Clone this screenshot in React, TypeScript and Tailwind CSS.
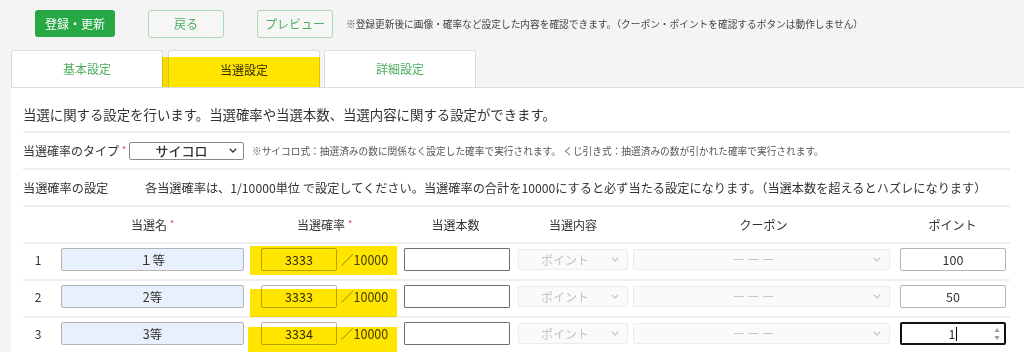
import React from "react";

const rows = [
  { no: 1, name: "１等", prob: "3333", point: "100", focused: false },
  { no: 2, name: "2等", prob: "3333", point: "50", focused: false },
  { no: 3, name: "3等", prob: "3334", point: "1", focused: true },
];

// marker highlights drawn over the probability column (hand-drawn, so each row differs)
const marks = [
  "absolute -left-[2px] -top-[2px] w-[147px] h-[29px] bg-[#ffe500] mix-blend-multiply",
  "absolute -left-[2px] top-[4px] w-[147px] h-[28px] bg-[#ffe500] mix-blend-multiply",
  "absolute -left-[4px] top-[5px] w-[149px] h-[30px] bg-[#ffe500] mix-blend-multiply",
];

const cols = "grid grid-cols-[30px_199px_145px_117px_118px_263px_115px]";

function Chevron({ color }: { color: string }) {
  return (
    <svg width="8" height="5" viewBox="0 0 8 5" fill="none">
      <path d="M0.8 0.8 L4 4 L7.2 0.8" stroke={color} strokeWidth="1.3" />
    </svg>
  );
}

function Req() {
  return (
    <span className="ml-[3px] inline-block -translate-y-[1px] self-center text-[9px] leading-[9px] text-[#e53935]">
      *
    </span>
  );
}

function DisabledSelect({ label, width }: { label: string; width: string }) {
  return (
    <div
      className={`flex h-[21px] items-center rounded-[2px] border border-[#ececec] bg-[#fafafa] ${width}`}
    >
      <span className="flex-1 text-center text-[12px] leading-[21px] text-[#c4c4c4]">{label}</span>
      <span className="mr-[8px] flex">
        <Chevron color="#c8c8c8" />
      </span>
    </div>
  );
}

export default function App() {
  return (
    <div className="h-[352px] w-[1024px] overflow-hidden bg-[#f4f4f4] font-['Noto_Sans_CJK_JP',sans-serif] text-[#333]">
      {/* action buttons */}
      <div className="ml-[35px] mt-[10px] flex h-[27px] items-center">
        <button className="h-[27px] w-[80px] rounded-[3px] bg-[#28a745] text-[12px] text-white">
          登録・更新
        </button>
        <button className="ml-[33px] h-[28px] w-[76px] rounded-[3px] border border-[#a9dbb3] bg-[#f6f6f6] text-[12px] text-[#4cae5c]">
          戻る
        </button>
        <button className="ml-[33px] h-[28px] w-[76px] rounded-[3px] border border-[#a9dbb3] bg-[#f6f6f6] text-[12px] text-[#4cae5c]">
          プレビュー
        </button>
        <p className="ml-[13px] text-[9.7px] leading-[14px] text-[#444]">
          ※登録更新後に画像・確率など設定した内容を確認できます。（クーポン・ポイントを確認するボタンは動作しません）
        </p>
      </div>

      {/* tabs */}
      <div className="relative ml-[11px] mt-[13px] flex h-[37px]">
        <div className="flex h-[37px] w-[152px] items-center justify-center rounded-t-[3px] border border-b-0 border-[#dcdcdc] bg-white text-[12px] text-[#4cae5c]">
          基本設定
        </div>
        <div className="ml-[5px] flex h-[37px] w-[152px] items-center justify-center rounded-t-[3px] border border-b-0 border-[#dcdcdc] bg-white pt-[2px] text-[12px] text-[#333]">
          当選設定
        </div>
        <div className="ml-[4px] flex h-[37px] w-[152px] items-center justify-center rounded-t-[3px] border border-b-0 border-[#dcdcdc] bg-white text-[12px] text-[#4cae5c]">
          詳細設定
        </div>
        <div className="absolute left-[151px] top-[7px] h-[30px] w-[158px] bg-[#ffe500] mix-blend-multiply" />
      </div>

      {/* panel */}
      <div className="ml-[11px] h-[300px] border-t border-[#dcdcdc] bg-white pl-[12px]">
        <div className="w-[987px]">
          <p className="h-[43px] pt-[16px] text-[13.4px] leading-[20px]">
            当選に関する設定を行います。当選確率や当選本数、当選内容に関する設定ができます。
          </p>

          <div className="flex h-[37px] items-center border-t-2 border-[#efefef]">
            <div className="flex w-[106px] text-[12px] leading-[18px]">
              当選確率のタイプ
              <Req />
            </div>
            <div className="flex h-[18px] w-[115px] items-center rounded-[2px] border border-[#8a8a8a] bg-white">
              <span className="flex-1 pl-[4px] text-center text-[13px] font-medium leading-[16px]">サイコロ</span>
              <span className="mr-[6px] flex">
                <Chevron color="#333" />
              </span>
            </div>
            <p className="ml-[8px] text-[9.7px] leading-[14px] text-[#555]">
              ※サイコロ式：抽選済みの数に関係なく設定した確率で実行されます。 くじ引き式：抽選済みの数が引かれた確率で実行されます。
            </p>
          </div>

          <div className="flex h-[37px] items-center border-t-2 border-[#efefef] text-[12.2px] leading-[18px]">
            <div className="w-[122px]">当選確率の設定</div>
            <div>
              各当選確率は、1/10000単位 で設定してください。当選確率の合計を10000にすると必ず当たる設定になります。（当選本数を超えるとハズレになります）
            </div>
          </div>

          {/* table head */}
          <div className={`${cols} h-[37px] items-center border-t-2 border-[#efefef] text-[12px] leading-[18px]`}>
            <div />
            <div className="flex justify-center">
              当選名
              <Req />
            </div>
            <div className="flex justify-center">
              当選確率
              <Req />
            </div>
            <div className="text-center">当選本数</div>
            <div className="text-center">当選内容</div>
            <div className="text-center">クーポン</div>
            <div className="text-center">ポイント</div>
          </div>

          {rows.map((r, i) => (
            <div key={r.no} className={`${cols} h-[37px] items-start border-t-2 border-[#efefef] pt-[4px]`}>
              <div className="text-center text-[12px] leading-[23px]">{r.no}</div>
              <div className="pl-[8px]">
                <div className="h-[23px] w-[183px] rounded-[2px] border border-[#b4b4b4] bg-[#e8f0fe] text-center text-[12.5px] leading-[21px]">
                  {r.name}
                </div>
              </div>
              <div className="relative flex items-center pl-[9px]">
                <div className="h-[23px] w-[76px] rounded-[2px] border border-[#b4b4b4] bg-white text-center text-[12.5px] leading-[21px]">
                  {r.prob}
                </div>
                <span className="ml-[4px] text-[12.5px] leading-[23px] text-[#444]">
                  <span className="text-[#888]">／</span>10000
                </span>
                <div className={marks[i]} />
              </div>
              <div className="pl-[7px]">
                <div className="h-[23px] w-[106px] rounded-[1px] border-[1.5px] border-[#6f6f6f] bg-white" />
              </div>
              <div className="pl-[4px] pt-[1px]">
                <DisabledSelect label="ポイント" width="w-[110px]" />
              </div>
              <div className="pl-[1px] pt-[1px]">
                <DisabledSelect label="ー ー ー" width="w-[257px]" />
              </div>
              <div className="pl-[5px]">
                {r.focused ? (
                  <div className="flex h-[23px] w-[106px] items-center rounded-[2px] border-2 border-[#111] bg-white">
                    <span className="flex flex-1 items-center justify-center pl-[10px] text-[12.5px] leading-[19px]">
                      {r.point}
                      <span className="ml-[1px] inline-block h-[14px] w-[1px] bg-black" />
                    </span>
                    <svg width="6" height="14" viewBox="0 0 6 14" className="mr-[4px]">
                      <path d="M3 1 L5.5 5 L0.5 5 Z" fill="#9a9a9a" />
                      <path d="M3 13 L5.5 9 L0.5 9 Z" fill="#9a9a9a" />
                    </svg>
                  </div>
                ) : (
                  <div className="h-[23px] w-[106px] rounded-[2px] border border-[#b4b4b4] bg-white text-center text-[12.5px] leading-[21px]">
                    {r.point}
                  </div>
                )}
              </div>
            </div>
          ))}
        </div>
      </div>
    </div>
  );
}
